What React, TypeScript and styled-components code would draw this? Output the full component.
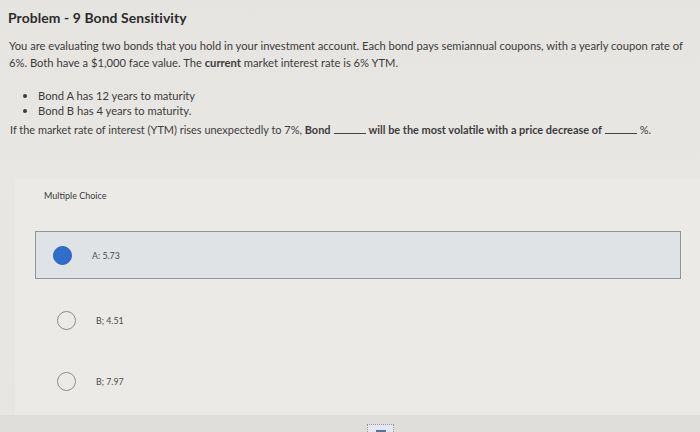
import React from "react";
import styled, { createGlobalStyle } from "styled-components";

const Global = createGlobalStyle`
  html, body { margin: 0; padding: 0; }
  body {
    width: 700px; height: 432px; overflow: hidden;
    background: #e4e2de;
    font-family: Lato, "Open Sans", "Liberation Sans", sans-serif;
    color: #3a3a3a;
  }
`;

const Page = styled.div`
  width: 700px;
  height: 432px;
  display: flex;
  flex-direction: column;
  background: linear-gradient(180deg, #e6e4e0 0%, #e9e7e4 40%, #e7e5e2 100%);
`;

const Header = styled.div`
  padding: 9px 0 0 8px;
  height: 28px;
  box-sizing: border-box;
`;

const Title = styled.h1`
  margin: 0;
  font-size: 13.9px;
  font-weight: 700;
  color: #2b2b2b;
  letter-spacing: 0.1px;
`;

const Body = styled.div`
  padding: 9px 6px 0 9px;
  font-size: 11.2px;
  line-height: 17px;
  color: #3c3c3c;
`;

const Para = styled.p`
  margin: 0;
`;

const Strong = styled.strong`
  font-weight: 700;
`;

const List = styled.ul`
  margin: 17px 0 0 0;
  padding-left: 29px;
  line-height: 15px;
  li::marker { font-size: 12px; }
`;

const Question = styled.p`
  margin: 3px 0 0 1px;
  font-size: 10.95px;
`;

const Blank = styled.span`
  display: inline-block;
  width: 32px;
  border-bottom: 1px solid #444;
  margin: 0 3px;
  vertical-align: baseline;
  height: 9px;
`;

const Panel = styled.div`
  margin: 40px 0 0 15px;
  height: 237px;
  background: #ebeae7;
  padding: 12px 19px 0 20px;
  box-sizing: border-box;
  display: flex;
  flex-direction: column;
`;

const Label = styled.div`
  font-size: 9px;
  color: #3a3a3a;
  padding-left: 9px;
  height: 41px;
  flex: none;
`;

const Option = styled.div<{ $selected?: boolean }>`
  flex: none;
  display: flex;
  align-items: center;
  height: ${(p) => (p.$selected ? "48px" : "40px")};
  margin-bottom: 21px;
  padding-left: ${(p) => (p.$selected ? "17px" : "21px")};
  border: 1px solid ${(p) => (p.$selected ? "#8f949a" : "transparent")};
  background: ${(p) => (p.$selected ? "#dfe3e6" : "transparent")};
  box-sizing: border-box;
  &:last-child { margin-bottom: 0; }
`;

const Radio = styled.span<{ $selected?: boolean }>`
  width: 19px;
  height: 19px;
  border-radius: 50%;
  box-sizing: border-box;
  flex: none;
  background: ${(p) => (p.$selected ? "#2f6ecb" : "transparent")};
  border: ${(p) => (p.$selected ? "1.5px solid #2860b8" : "1.5px solid #8b8b8b")};
`;

const OptText = styled.span`
  margin-left: 20px;
  font-size: 8.8px;
  color: #4a4a4a;
`;

const Footer = styled.div`
  flex: 1;
  background: #e0dedb;
  display: flex;
  justify-content: flex-start;
  align-items: flex-end;
  padding-left: 367px;
`;

const Marker = styled.div`
  width: 25px;
  height: 7px;
  border: 1px dotted #8a93a8;
  border-bottom: none;
  background: #e6e8ee;
  display: flex;
  justify-content: center;
  align-items: flex-end;
  &::after {
    content: "";
    width: 10px;
    height: 2px;
    background: #5a6f9f;
  }
`;

export default function App() {
  return (
    <Page>
      <Global />
      <Header>
        <Title>Problem - 9 Bond Sensitivity</Title>
      </Header>
      <Body>
        <Para>
          You are evaluating two bonds that you hold in your investment account. Each bond pays semiannual coupons, with a yearly coupon rate of 6%. Both have a $1,000 face value. The <Strong>current</Strong> market interest rate is 6% YTM.
        </Para>
        <List>
          <li>Bond A has 12 years to maturity</li>
          <li>Bond B has 4 years to maturity.</li>
        </List>
        <Question>
          If the market rate of interest (YTM) rises unexpectedly to 7%, <Strong>Bond</Strong>
          <Blank />
          <Strong>will be the most volatile with a price decrease of</Strong>
          <Blank />%.
        </Question>
      </Body>
      <Panel>
        <Label>Multiple Choice</Label>
        <Option $selected>
          <Radio $selected />
          <OptText>A: 5.73</OptText>
        </Option>
        <Option>
          <Radio />
          <OptText>B; 4.51</OptText>
        </Option>
        <Option>
          <Radio />
          <OptText>B; 7.97</OptText>
        </Option>
      </Panel>
      <Footer>
        <Marker />
      </Footer>
    </Page>
  );
}
